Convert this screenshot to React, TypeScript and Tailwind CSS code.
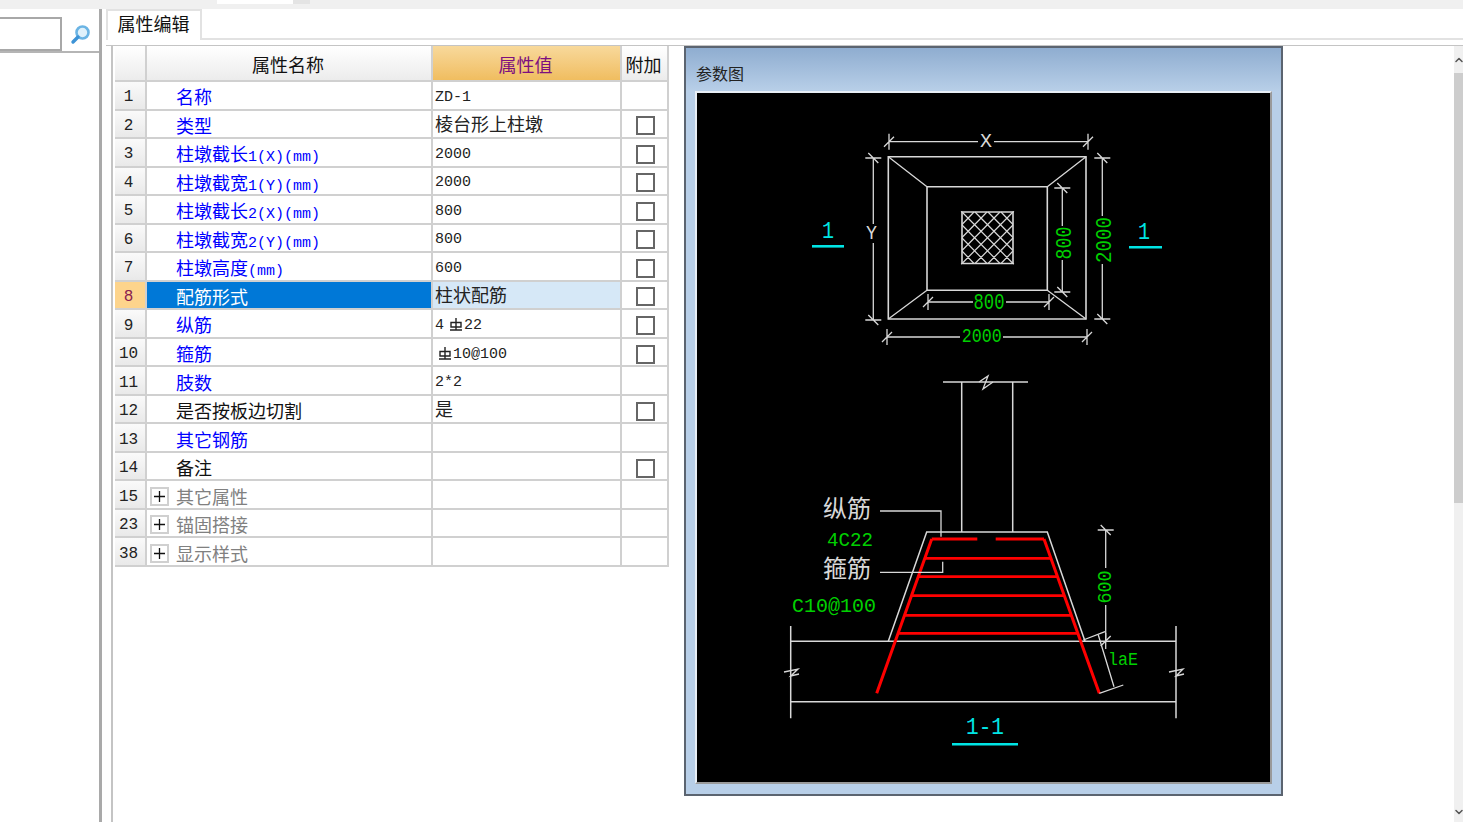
import { ChevronDown, ChevronUp } from 'lucide-react'

const CJK = "font-['Liberation_Mono','Noto_Sans_CJK_SC',monospace]"

type Row = {
  no: number
  name: string
  unit?: string
  value?: string
  check?: boolean
  tone: 'blue' | 'black' | 'gray' | 'selected'
  plus?: boolean
}

const rows: Row[] = [
  { no: 1, name: '名称', value: 'ZD-1', tone: 'blue' },
  { no: 2, name: '类型', value: '棱台形上柱墩', check: true, tone: 'blue' },
  { no: 3, name: '柱墩截长', unit: '1(X)(mm)', value: '2000', check: true, tone: 'blue' },
  { no: 4, name: '柱墩截宽', unit: '1(Y)(mm)', value: '2000', check: true, tone: 'blue' },
  { no: 5, name: '柱墩截长', unit: '2(X)(mm)', value: '800', check: true, tone: 'blue' },
  { no: 6, name: '柱墩截宽', unit: '2(Y)(mm)', value: '800', check: true, tone: 'blue' },
  { no: 7, name: '柱墩高度', unit: '(mm)', value: '600', check: true, tone: 'blue' },
  { no: 8, name: '配筋形式', value: '柱状配筋', check: true, tone: 'selected' },
  { no: 9, name: '纵筋', value: '4⏀22', check: true, tone: 'blue' },
  { no: 10, name: '箍筋', value: '⏀10@100', check: true, tone: 'blue' },
  { no: 11, name: '肢数', value: '2*2', tone: 'blue' },
  { no: 12, name: '是否按板边切割', value: '是', check: true, tone: 'black' },
  { no: 13, name: '其它钢筋', tone: 'blue' },
  { no: 14, name: '备注', check: true, tone: 'black' },
  { no: 15, name: '其它属性', tone: 'gray', plus: true },
  { no: 23, name: '锚固搭接', tone: 'gray', plus: true },
  { no: 38, name: '显示样式', tone: 'gray', plus: true },
]

const nameTone = {
  blue: 'bg-white text-[#0000ff]',
  black: 'bg-white text-[#111111]',
  gray: 'bg-white text-[#808080]',
  selected: 'bg-[#0078d7] text-white',
}

// 钢筋符号 (grade symbol), drawn since no font carries it
function BarSymbol({ className }: { className: string }) {
  return (
    <svg width="14" height="14" viewBox="0 0 14 14" className={`inline-block align-[-2px] mr-[1px] ${className}`}>
      <path d="M7 1V13M1 13H13M2 5.5H12V10H2Z" fill="none" stroke="#222" strokeWidth="1.4" />
    </svg>
  )
}

function ValueText({ value }: { value?: string }) {
  if (!value) return null
  const parts = value.split('⏀')
  if (parts.length === 1) return <span>{value}</span>
  return (
    <span className="whitespace-pre">
      {parts[0]}
      <BarSymbol className={parts[0] ? 'ml-[5px]' : 'ml-[3px]'} />
      {parts[1]}
    </span>
  )
}

function TableRow({ row }: { row: Row }) {
  const selected = row.tone === 'selected'
  const valueIsLatin = /^[\x00-\x7F⏀]*$/.test(row.value ?? '')
  return (
    <div className="grid min-h-0 grid-cols-[32px_286px_189px_47px] grid-rows-[minmax(0,1fr)]">
      <div
        className={`flex items-center justify-center overflow-hidden border-r-2 border-b-2 border-[#d0d0d0] pt-[4px] pr-[3px] text-[16px] ${
          selected ? 'bg-[#fdd48c] text-[#8a2050]' : 'bg-gradient-to-b from-[#fafafa] to-[#e9e9e9] text-[#222222]'
        }`}
      >
        {row.no}
      </div>
      <div className={`flex items-center overflow-hidden border-r-2 border-b-2 border-[#d0d0d0] text-[18px] leading-none ${nameTone[row.tone]}`}>
        {row.plus ? (
          <span className="mt-[3px] ml-[3px] mr-[7px] flex h-[19px] w-[19px] items-center justify-center border-2 border-[#d0d0d0] bg-white text-[#111111]">
            <svg width="11" height="11" viewBox="0 0 11 11">
              <path d="M5.5 0V11M0 5.5H11" stroke="#111" strokeWidth="1.3" />
            </svg>
          </span>
        ) : (
          <span className="w-[29px] shrink-0" />
        )}
        <span className="inline-block translate-y-[4px] whitespace-pre">
          {row.name}
          {row.unit && <span className="text-[15px]">{row.unit}</span>}
        </span>
      </div>
      <div
        className={`flex items-center overflow-hidden border-r-2 border-b-2 border-[#d0d0d0] pt-[4px] pl-[2px] leading-none text-[#222222] ${
          selected ? 'bg-[#d6e8f7]' : 'bg-white'
        } ${valueIsLatin ? 'text-[15px]' : 'text-[18px]'}`}
      >
        <ValueText value={row.value} />
      </div>
      <div className="flex items-center justify-center overflow-hidden border-r-2 border-b-2 border-[#d0d0d0] bg-white pt-[4px] pl-[1px]">
        {row.check && <span className="h-[19px] w-[19px] border-2 border-[#666666] bg-white" />}
      </div>
    </div>
  )
}

const W = '#d8d8d8'
const G = '#00d000'
const C = '#00e5e5'
const R = '#ff0000'

function Line({ d, color = W, width = 1.3 }: { d: string; color?: string; width?: number }) {
  return <path d={d} fill="none" stroke={color} strokeWidth={width} />
}

function Label({
  x,
  y,
  size,
  color,
  children,
  rotate,
  length,
}: {
  x: number
  y: number
  size: number
  color: string
  children: string
  rotate?: boolean
  length?: number
}) {
  return (
    <text
      x={x}
      y={y}
      fill={color}
      fontSize={size}
      textAnchor="middle"
      dominantBaseline="central"
      fontFamily="'Liberation Mono','Noto Sans CJK SC',monospace"
      textLength={length}
      lengthAdjust={length ? 'spacingAndGlyphs' : undefined}
      transform={rotate ? `rotate(-90 ${x} ${y})` : undefined}
    >
      {children}
    </text>
  )
}

// little slanted dimension ticks
function Tick({ x, y, horizontal }: { x: number; y: number; horizontal?: boolean }) {
  return horizontal ? (
    <Line d={`M${x - 8} ${y}H${x + 8}M${x - 5} ${y - 5}L${x + 5} ${y + 5}`} />
  ) : (
    <Line d={`M${x} ${y - 8}V${y + 8}M${x - 5} ${y + 5}L${x + 5} ${y - 5}`} />
  )
}

const barYs = [558.3, 576.7, 595.7, 615.3, 633.3]
const leftAt = (y: number) => 931.7 - ((y - 539) * 55) / 154.3
const rightAt = (y: number) => 1044 + ((y - 539) * 55.3) / 154.3

function Drawing() {
  const hatch: string[] = []
  for (let i = -4; i <= 4; i++) {
    const o = i * 13
    hatch.push(`M${962 + Math.max(o, 0)} ${212 + Math.max(-o, 0)}L${1013 - Math.max(-o, 0)} ${263.5 - Math.max(o, 0)}`)
    hatch.push(`M${1013 - Math.max(o, 0)} ${212 + Math.max(-o, 0)}L${962 + Math.max(-o, 0)} ${263.5 - Math.max(o, 0)}`)
  }

  return (
    <svg viewBox="697 93 573 689" className="block h-full w-full">
      {/* plan view */}
      <Line d="M888.3 156.7H1086V319H888.3Z" width={1.6} />
      <Line d="M927 186.7H1047.3V290.3H927Z" width={1.6} />
      <Line d="M888.3 156.7L927 186.7M1086 156.7L1047.3 186.7M888.3 319L927 290.3M1086 319L1047.3 290.3" />
      <Line d="M962 212H1013V263.5H962Z" width={1.6} />
      <Line d={hatch.join('')} width={1.2} />

      <Line d="M889 141.7H978M994 141.7H1088" />
      <Tick x={889} y={141.7} />
      <Tick x={1088} y={141.7} />
      <Label x={986} y={141} size={20} color={W} length={12}>X</Label>

      <Line d="M873.3 158V224M873.3 243V320" />
      <Tick x={873.3} y={158} horizontal />
      <Tick x={873.3} y={320} horizontal />
      <Label x={871.5} y={233} size={20} color={W} length={11}>Y</Label>

      <Line d="M1102.3 158V216M1102.3 264V319" />
      <Tick x={1102.3} y={158} horizontal />
      <Tick x={1102.3} y={319} horizontal />
      <Label x={1105} y={240} size={22} color={G} rotate length={46}>2000</Label>

      <Line d="M1062.3 188V226M1062.3 260V292" />
      <Tick x={1062.3} y={188} horizontal />
      <Tick x={1062.3} y={292} horizontal />
      <Label x={1065} y={243} size={22} color={G} rotate length={33}>800</Label>

      <Line d="M928 302H973M1006 302H1049" />
      <Tick x={928} y={302} />
      <Tick x={1049} y={302} />
      <Label x={989} y={303} size={22} color={G} length={31}>800</Label>

      <Line d="M887 337H960M1003 337H1087" />
      <Tick x={887} y={337} />
      <Tick x={1087} y={337} />
      <Label x={981.7} y={336} size={21} color={G} length={40}>2000</Label>

      <Label x={828} y={231} size={24} color={C} length={12}>1</Label>
      <Line d="M812 246.3H844" color={C} width={2.6} />
      <Label x={1144} y={232} size={24} color={C} length={12}>1</Label>
      <Line d="M1129 247.3H1162" color={C} width={2.6} />

      {/* section 1-1 */}
      <Line d="M943 382H1028M961.7 382V532M1012.7 382V532" width={1.5} />
      <Line d="M979 382L988 376L983 389L993 382" />
      <Line d="M888.3 641.3L926.7 532H1047.3L1085 641.3" width={1.5} />
      <Line d="M790.7 641.3H1176M790.7 701.7H1176M790.7 626V718.3M1176 626V718.3" width={1.5} />
      <Line d="M784 672L798 669L790.7 676L799 674" />
      <Line d="M1169 672L1183 669L1176 676L1184 674" />

      <Line d={`M931.7 539L876.7 693.3M1044 539L1099.3 693.3`} color={R} width={3} />
      <Line d="M931.7 539H977.3M995.7 539H1044" color={R} width={2.8} />
      {barYs.map((y) => (
        <Line key={y} d={`M${leftAt(y)} ${y}H${rightAt(y)}`} color={R} width={2.8} />
      ))}

      <Line d="M880 511H941V536.7M880 572.3H942.7V561.7" />
      <Label x={847} y={510} size={24} color={W}>纵筋</Label>
      <Label x={850} y={540} size={21} color={G} length={46}>4C22</Label>
      <Label x={847} y={570} size={24} color={W}>箍筋</Label>
      <Label x={834} y={606} size={21} color={G} length={84}>C10@100</Label>

      <Line d="M1105.7 530V568M1105.7 605V641.7" />
      <Tick x={1105.7} y={530} horizontal />
      <Tick x={1105.7} y={641} />
      <Label x={1105} y={587} size={21} color={G} rotate length={33}>600</Label>

      <Line d="M1083.3 640L1105 631.7M1099.3 693.3L1123.3 685M1098.3 635L1114 686.7" />
      <Label x={1123} y={660} size={18} color={G} length={30}>laE</Label>

      <Label x={985} y={727} size={24} color={C} length={38}>1-1</Label>
      <Line d="M952 744.3H1018" color={C} width={2.6} />
    </svg>
  )
}

export default function App() {
  return (
    <div className={`flex h-[822px] w-[1463px] flex-col overflow-hidden bg-white ${CJK}`}>
      {/* top strip */}
      <div className="h-[9px] shrink-0 bg-[#f0f0f0] pl-[217px]">
        <div className="flex h-[4px] w-[93px]">
          <div className="w-[76px] bg-white" />
          <div className="w-[17px] bg-[#e4e4e4]" />
        </div>
      </div>

      <div className="flex min-h-0 flex-1">
        {/* left tree panel */}
        <div className="flex w-[102px] shrink-0 flex-col border-r-[3px] border-[#a9a9a9] bg-white pt-[8px]">
          <div className="flex h-[36px] shrink-0 items-start border-b-2 border-[#b5b5b5]">
            <div className="h-[34px] w-[62px] border-r-2 border-b-2 border-t-2 border-[#a8a8a8] bg-white" />
            <div className="ml-[8px] mt-[7px]">
              <svg width="21" height="21" viewBox="0 0 21 21">
                <circle cx="12.5" cy="8.5" r="6" fill="#dff1fb" stroke="#6bb4e4" strokeWidth="2.6" />
                <path d="M8 13L3 18" stroke="#3d93d6" strokeWidth="3.4" strokeLinecap="round" />
              </svg>
            </div>
          </div>
        </div>

        {/* main area */}
        <div className="flex min-w-0 flex-1 flex-col pl-[4px]">
          <div className="flex h-[31px] shrink-0 items-end border-b-2 border-[#e2e2e2]">
            <div className="-mb-[2px] flex h-[31px] w-[96px] items-center justify-center border-x-2 border-t-2 border-[#e2e2e2] bg-white pr-[1px] text-[18px] leading-none text-[#111111]">
              属性编辑
            </div>
          </div>

          <div className="mt-[5px] flex min-h-0 flex-1 border-t border-[#c4c4c4]">
            <div className="ml-[5px] flex min-w-0 flex-1 border-l-2 border-[#c4c4c4] pl-[2px]">
              {/* property grid */}
              <div className="flex w-[554px] shrink-0 flex-col">
                <div className="grid h-[36px] grid-cols-[32px_286px_189px_47px] text-[18px] leading-none">
                  <div className="border-r-2 border-b-2 border-[#d0d0d0] bg-gradient-to-b from-[#ffffff] to-[#ececec]" />
                  <div className="flex items-center justify-center border-r-2 border-b-2 border-[#d0d0d0] bg-gradient-to-b from-[#ffffff] to-[#ececec] pt-[8px] pr-[2px] text-[#111111]">
                    属性名称
                  </div>
                  <div className="flex items-center justify-center border-r-2 border-b-2 border-[#d0d0d0] bg-gradient-to-b from-[#f8d99b] to-[#f0bd5f] pt-[8px] pr-[2px] text-[#7d0f7f]">
                    属性值
                  </div>
                  <div className="flex items-center justify-center border-r-2 border-b-2 border-[#d0d0d0] bg-gradient-to-b from-[#ffffff] to-[#ececec] pt-[8px] pr-[2px] text-[#111111]">
                    附加
                  </div>
                </div>
                <div className="grid h-[485px] grid-rows-[repeat(17,minmax(0,1fr))]">
                  {rows.map((row) => (
                    <TableRow key={row.no} row={row} />
                  ))}
                </div>
              </div>

              {/* parameter picture */}
              <div className="ml-[15px] h-[750px] w-[599px] shrink-0 border-2 border-[#5b6470] bg-[#b8cfe8]">
                <div className="flex h-[43px] items-end bg-gradient-to-b from-[#8fadd0] to-[#b8cfe8] pb-[7px] pl-[10px] text-[16px] leading-none text-[#222222]">
                  参数图
                </div>
                <div className="ml-[9px] h-[693px] w-[577px] border-2 border-t-[#e8eef5] border-l-[#e8eef5] border-r-[#9a9a9a] border-b-[#9a9a9a] bg-black">
                  <Drawing />
                </div>
              </div>

              <div className="flex-1" />

              {/* scrollbar */}
              <div className="flex w-[9px] shrink-0 flex-col bg-[#f0f0f0]">
                <div className="flex h-[27px] items-center justify-center overflow-hidden">
                  <ChevronUp size={12} strokeWidth={3} className="shrink-0 text-[#555555]" />
                </div>
                <div className="h-[430px] bg-[#cdcdcd]" />
                <div className="flex-1" />
                <div className="flex h-[20px] items-center justify-center overflow-hidden">
                  <ChevronDown size={12} strokeWidth={3} className="shrink-0 text-[#555555]" />
                </div>
              </div>
            </div>
          </div>
        </div>
      </div>
    </div>
  )
}
